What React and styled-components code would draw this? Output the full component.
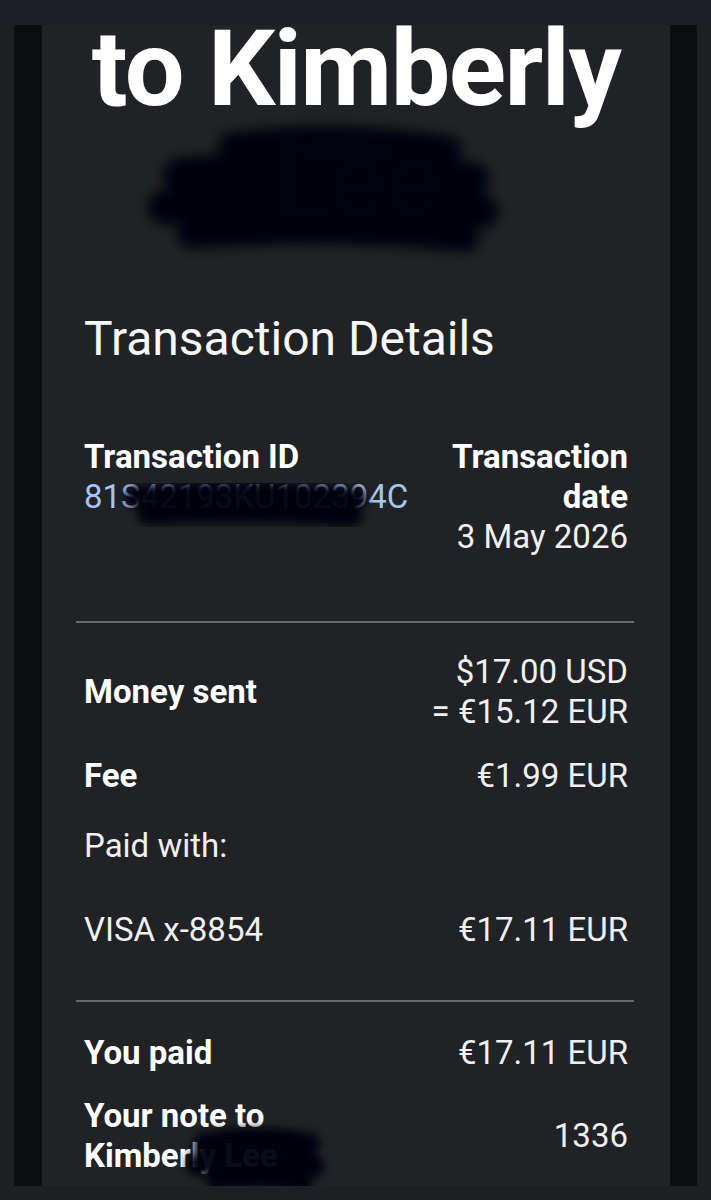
import styled, { createGlobalStyle } from "styled-components";

const GlobalStyle = createGlobalStyle`
  html, body {
    margin: 0;
    padding: 0;
    background: #1e1f23;
  }
  body {
    font-family: Roboto, "Noto Sans", "Liberation Sans", sans-serif;
    color: #f5f5f5;
    width: 711px;
    height: 1200px;
    overflow: hidden;
  }
`;

const StatusStrip = styled.div`
  height: 25px;
  background: #1c1f27;
`;

const Frame = styled.div`
  display: flex;
  height: 1161px;
  padding: 0 14px;
`;

const Shade = styled.div`
  width: ${(p) => p.$w}px;
  background: #0d0e11;
`;

const Panel = styled.main`
  flex: 1;
  background: #212226;
  padding: 0 42px;
  overflow: hidden;
`;

const Title = styled.h1`
  margin: 0;
  font-size: 106px;
  line-height: 88px;
  font-weight: 700;
  text-align: center;
  color: #ffffff;
  letter-spacing: -1.5px;
`;

const TitleLine = styled.span`
  display: block;
  position: relative;
  margin-top: ${(p) => (p.$hidden ? 22 : 0)}px;
  color: ${(p) => (p.$hidden ? "#2c2c30" : "#ffffff")};
`;

const Blot = styled.svg`
  position: absolute;
  left: ${(p) => p.$x}px;
  top: ${(p) => p.$y}px;
  width: ${(p) => p.$w}px;
  height: ${(p) => p.$h}px;
  pointer-events: none;
  overflow: visible;
`;

const Heading = styled.h2`
  margin: 88px 0 0;
  font-size: 48px;
  line-height: 56px;
  font-weight: 400;
  color: #f7f7f7;
`;

const Row = styled.div`
  display: flex;
  justify-content: space-between;
  align-items: ${(p) => p.$align || "center"};
  margin-top: ${(p) => p.$gap || 0}px;
  font-size: 33px;
  line-height: 40px;
`;

const Cell = styled.div`
  position: relative;
  text-align: ${(p) => (p.$right ? "right" : "left")};
  font-weight: ${(p) => (p.$bold ? 700 : 400)};
  color: ${(p) => (p.$bold ? "#ffffff" : "#f0f0f0")};
`;

const Strong = styled.div`
  font-weight: 700;
  color: #ffffff;
`;

const IdText = styled.div`
  position: relative;
  color: #a8c4f0;
  font-weight: 400;
`;

const Divider = styled.hr`
  margin: ${(p) => p.$gap}px -6px 0 -8px;
  border: none;
  height: 2px;
  background: #67686d;
`;

const Masked = styled.span`
  position: relative;
`;

function Scribble({ x, y, w, h, strokes, blur = 5 }) {
  const id = `blur-${x}-${y}`;
  return (
    <Blot $x={x} $y={y} $w={w} $h={h} viewBox={`0 0 ${w} ${h}`}>
      <defs>
        <filter id={id} x="-20%" y="-40%" width="140%" height="180%">
          <feGaussianBlur stdDeviation={blur} />
        </filter>
      </defs>
      <g filter={`url(#${id})`} fill="none" stroke="#060607" strokeLinecap="round" opacity="0.95">
        {strokes.map((s, i) => (
          <path key={i} d={s.d} strokeWidth={s.sw} />
        ))}
      </g>
    </Blot>
  );
}

const titleStrokes = [
  { d: "M80 16 C150 6 240 8 300 20", sw: 24 },
  { d: "M30 46 C110 36 240 36 322 50", sw: 34 },
  { d: "M16 78 C120 70 250 72 330 82", sw: 36 },
  { d: "M40 106 C150 100 250 102 316 110", sw: 26 },
];

const idStrokes = [
  { d: "M16 16 C80 10 170 10 236 18", sw: 22 },
  { d: "M28 34 C100 30 180 32 232 36", sw: 20 },
];

const noteStrokes = [
  { d: "M20 14 C60 6 100 8 125 14", sw: 22 },
  { d: "M14 34 C60 28 100 30 128 36", sw: 24 },
  { d: "M30 52 C70 48 100 50 120 54", sw: 16 },
];

export default function App() {
  return (
    <>
      <GlobalStyle />
      <StatusStrip />
      <Frame>
        <Shade $w={28} />
        <Panel>
          <Title>
            <TitleLine>to Kimberly</TitleLine>
            <TitleLine $hidden>
              Lee
              <Scribble x={66} y={-6} w={340} h={124} strokes={titleStrokes} blur={6} />
            </TitleLine>
          </Title>

          <Heading>Transaction Details</Heading>

          <Row $align="flex-start" $gap={70}>
            <Cell>
              <Strong>Transaction ID</Strong>
              <IdText>
                81S42193KU102394C
                <Scribble x={36} y={4} w={250} h={50} strokes={idStrokes} blur={4} />
              </IdText>
            </Cell>
            <Cell $right>
              <Strong>
                Transaction
                <br />
                date
              </Strong>
              3 May 2026
            </Cell>
          </Row>

          <Divider $gap={64} />

          <Row $gap={29}>
            <Cell $bold>Money sent</Cell>
            <Cell $right>
              $17.00 USD
              <br />= €15.12 EUR
            </Cell>
          </Row>

          <Row $gap={24}>
            <Cell $bold>Fee</Cell>
            <Cell $right>€1.99 EUR</Cell>
          </Row>

          <Row $gap={30}>
            <Cell>Paid with:</Cell>
          </Row>

          <Row $gap={44}>
            <Cell>VISA x-8854</Cell>
            <Cell $right>€17.11 EUR</Cell>
          </Row>

          <Divider $gap={50} />

          <Row $gap={31}>
            <Cell $bold>You paid</Cell>
            <Cell $right>€17.11 EUR</Cell>
          </Row>

          <Row $gap={23}>
            <Cell $bold>
              Your note to
              <br />
              <Masked>
                Kimberly Lee
                <Scribble x={100} y={-6} w={140} h={64} strokes={noteStrokes} blur={4} />
              </Masked>
            </Cell>
            <Cell $right>1336</Cell>
          </Row>
        </Panel>
        <Shade $w={27} />
      </Frame>
    </>
  );
}
